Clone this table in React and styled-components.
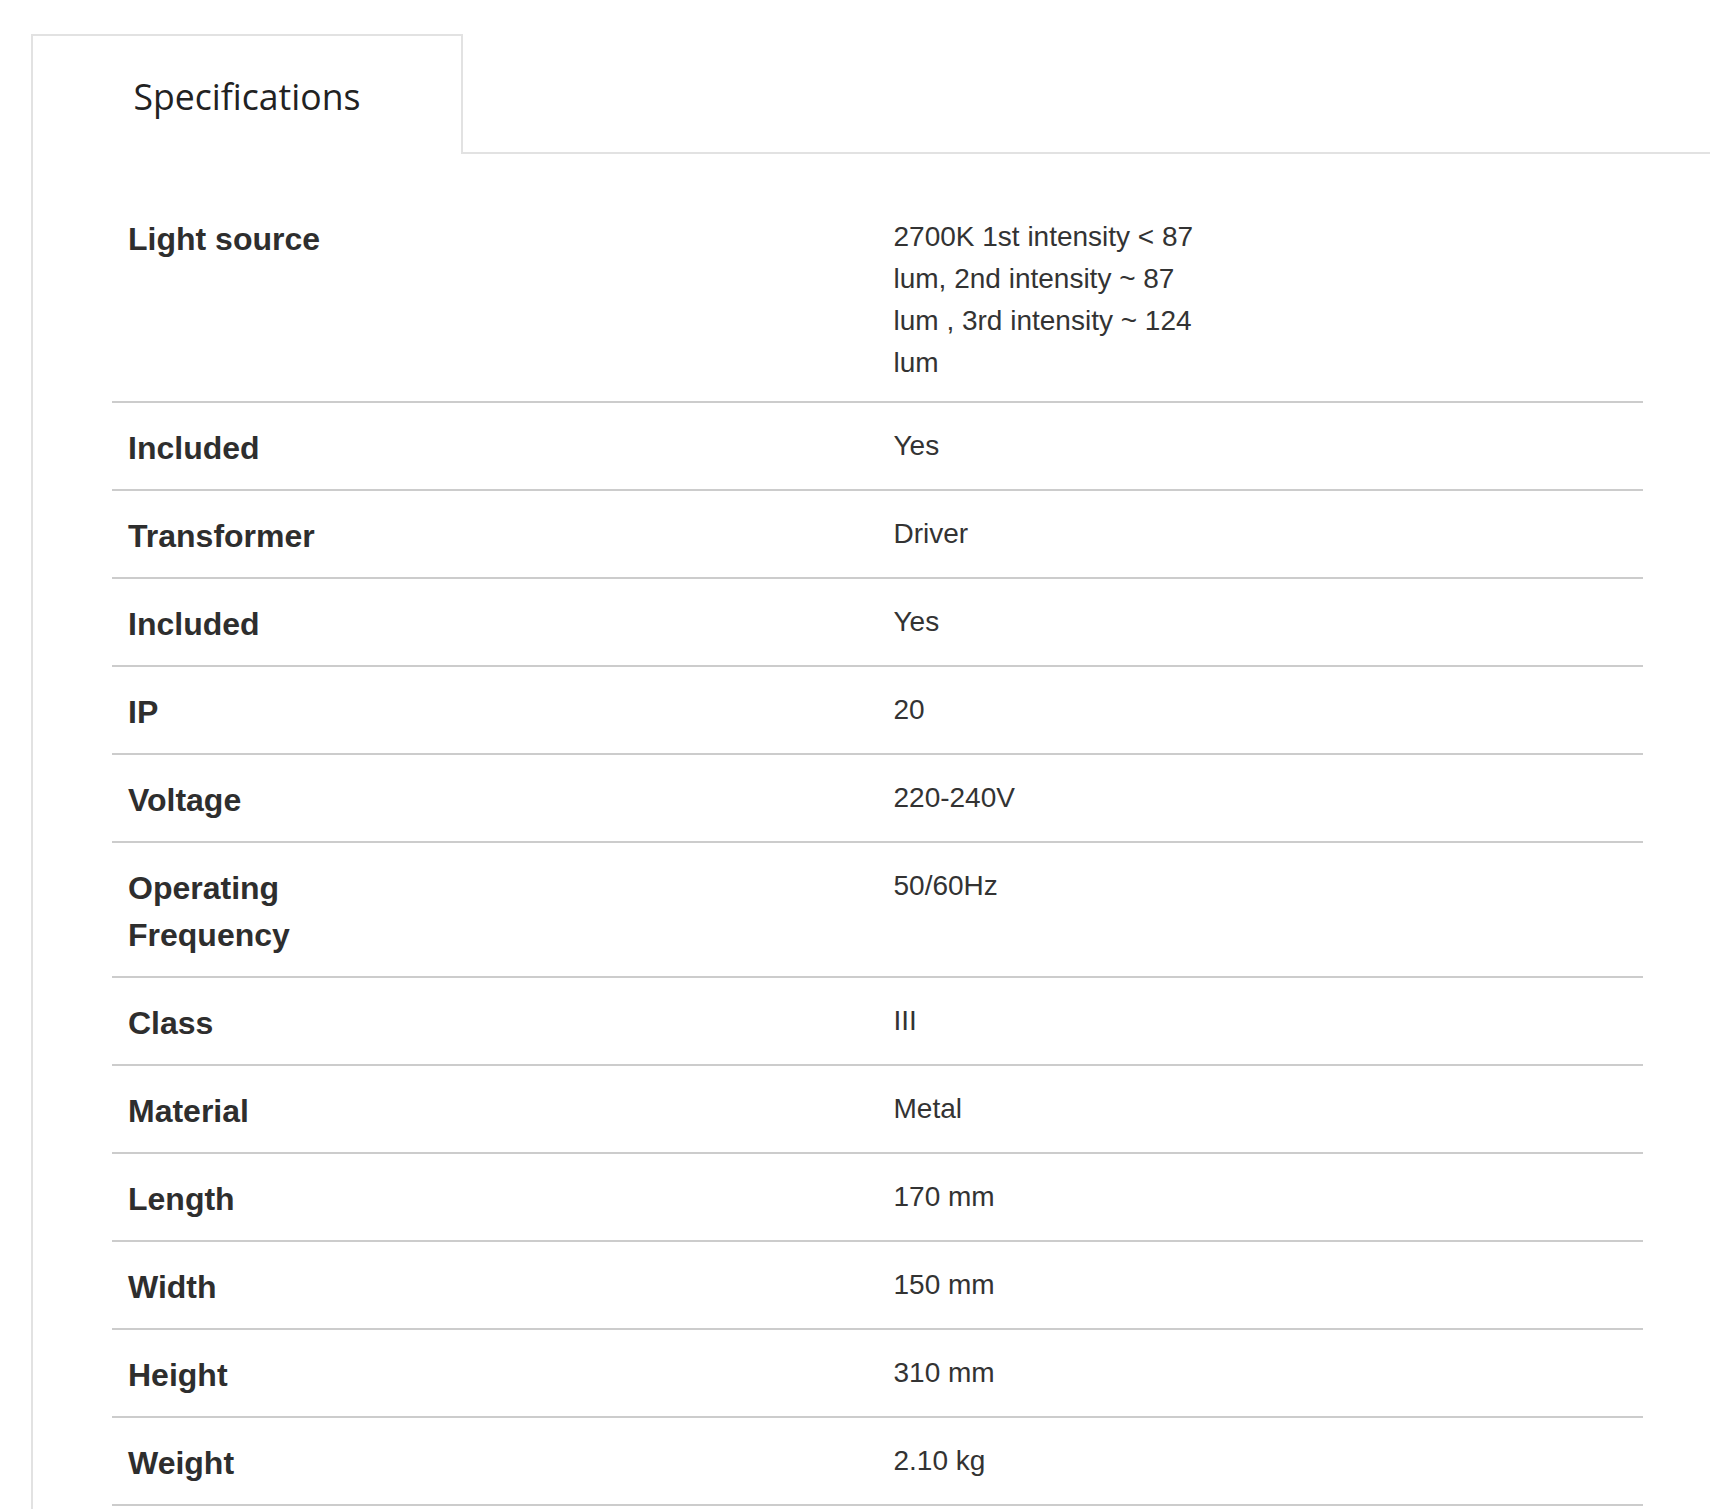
import React from 'react'
import styled, { createGlobalStyle } from 'styled-components'

const GlobalStyle = createGlobalStyle`
    html, body {
        margin: 0;
        padding: 0;
        background: #ffffff;
        overflow: hidden;
    }
`

const Page = styled.div`
    padding: 34px 0 0 31px;
    font-family: "Liberation Sans", Arial, sans-serif;
    color: #333333;
`

const TabBar = styled.div`
    display: flex;
    align-items: stretch;
`

const Tab = styled.div`
    display: flex;
    align-items: center;
    justify-content: center;
    box-sizing: border-box;
    width: 432px;
    height: 120px;
    padding-top: 2px;
    border: 2px solid #e2e2e2;
    border-bottom: none;
    font-family: "Open Sans", "Noto Sans", sans-serif;
    font-size: 35.6px;
    color: #222222;
`

const TabLine = styled.div`
    flex: 1;
    border-bottom: 2px solid #e2e2e2;
`

const Panel = styled.div`
    border-left: 2px solid #e2e2e2;
    padding: 40px 67px 60px 79px;
`

const Row = styled.div`
    display: grid;
    grid-template-columns: 50% 50%;
    border-bottom: 2px solid #cccccc;
`

const Label = styled.div`
    padding: 22px 16px 17px 16px;
    font-size: 32px;
    font-weight: 700;
    line-height: 47px;
    color: #2e2e2e;

    span {
        display: block;
        max-width: 300px;
    }
`

const Value = styled.div`
    padding: 22px 16px 17px 16px;
    font-size: 28px;
    line-height: 42px;
    color: #333333;

    span {
        display: block;
        max-width: 325px;
    }
`

const specs = [
    ['Light source', '2700K 1st intensity < 87 lum, 2nd intensity ~ 87 lum , 3rd intensity ~ 124 lum'],
    ['Included', 'Yes'],
    ['Transformer', 'Driver'],
    ['Included', 'Yes'],
    ['IP', '20'],
    ['Voltage', '220-240V'],
    ['Operating Frequency', '50/60Hz'],
    ['Class', 'III'],
    ['Material', 'Metal'],
    ['Length', '170 mm'],
    ['Width', '150 mm'],
    ['Height', '310 mm'],
    ['Weight', '2.10 kg'],
]

const App = () => {
    return (
        <Page>
            <GlobalStyle />
            <TabBar>
                <Tab>Specifications</Tab>
                <TabLine />
            </TabBar>
            <Panel>
                {specs.map(([label, value], i) => (
                    <Row key={i}>
                        <Label><span>{label}</span></Label>
                        <Value><span>{value}</span></Value>
                    </Row>
                ))}
            </Panel>
        </Page>
    )
}

export default App
